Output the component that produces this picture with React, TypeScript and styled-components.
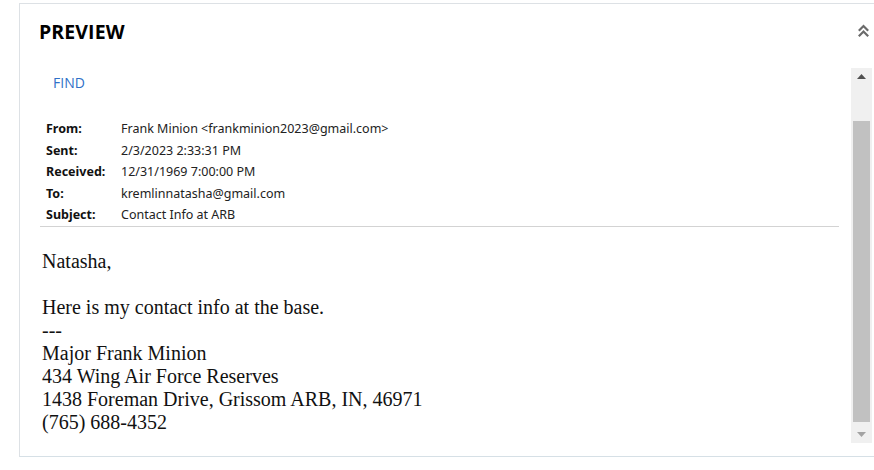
import React from "react";
import styled, { createGlobalStyle } from "styled-components";

const Global = createGlobalStyle`
  html, body { margin: 0; padding: 0; background: #ffffff; }
  body { font-family: "Noto Sans", "Open Sans", sans-serif; overflow: hidden; }
`;

const Panel = styled.section`
  margin: 3px 0 0 19px;
  width: 870px;
  height: 452px;
  border: 1px solid #dde1e5;
  border-bottom-color: #d6e0e6;
  display: flex;
  flex-direction: column;
  background: #fff;
`;

const Header = styled.header`
  height: 64px;
  display: flex;
  align-items: center;
  justify-content: space-between;
  padding: 0 21px 10px 19px;
  box-sizing: border-box;
`;

const Title = styled.h2`
  margin: 0;
  font-family: "Open Sans", "Noto Sans", sans-serif;
  font-size: 19.5px;
  font-weight: 700;
  color: #000;
  letter-spacing: 0.1px;
`;

const CollapseButton = styled.button`
  border: 0;
  background: none;
  padding: 0;
  width: 11px;
  height: 14px;
  display: flex;
  cursor: pointer;
`;

const Body = styled.div`
  display: flex;
  height: 375px;
  margin-right: 18px;
`;

const Content = styled.div`
  flex: 1;
  overflow: hidden;
  padding: 0 12px 0 20px;
`;

const FindLink = styled.a`
  display: block;
  margin: 5px 0 0 13px;
  font-family: "Open Sans", "Noto Sans", sans-serif;
  font-size: 14px;
  line-height: 19px;
  color: #2f70c8;
  text-decoration: none;
`;

const MetaTable = styled.table`
  margin: 26px 0 0 5px;
  border-collapse: collapse;
  font-family: "Noto Sans", "Open Sans", sans-serif;
  color: #222;
`;

const MetaLabel = styled.th`
  text-align: left;
  font-size: 12.5px;
  font-weight: 700;
  color: #111;
  padding: 0 12px 0 1px;
  height: 21.5px;
  width: 63px;
  white-space: nowrap;
`;

const MetaValue = styled.td`
  padding: 0;
  height: 21.5px;
  font-size: 12.5px;
`;

const Divider = styled.hr`
  margin: 0;
  border: 0;
  border-top: 1px solid #d3d3d3;
`;

const Message = styled.div`
  margin: 23px 0 0 2px;
  font-family: "Liberation Serif", "Times New Roman", serif;
  font-size: 20px;
  line-height: 23px;
  color: #111;
`;

const Line = styled.div`
  min-height: 23px;
`;

const Scrollbar = styled.div`
  width: 21px;
  background: #f0f0f0;
  display: flex;
  flex-direction: column;
  align-items: center;
`;

const ArrowBox = styled.div`
  height: 17px;
  width: 100%;
  display: flex;
  align-items: center;
  justify-content: center;
`;

const Track = styled.div`
  flex: 1;
  width: 100%;
  display: flex;
  flex-direction: column;
  align-items: center;
`;

const Thumb = styled.div`
  width: 17px;
  background: #c1c1c1;
`;

const Triangle = ({ up, color }: { up?: boolean; color: string }) => (
  <svg width="9" height="5" viewBox="0 0 9 5">
    {up ? <polygon points="0,5 9,5 4.5,0" fill={color} /> : <polygon points="0,0 9,0 4.5,5" fill={color} />}
  </svg>
);

const rows: [string, string][] = [
  ["From:", "Frank Minion <frankminion2023@gmail.com>"],
  ["Sent:", "2/3/2023 2:33:31 PM"],
  ["Received:", "12/31/1969 7:00:00 PM"],
  ["To:", "kremlinnatasha@gmail.com"],
  ["Subject:", "Contact Info at ARB"],
];

const lines = [
  "Natasha,",
  "",
  "Here is my contact info at the base.",
  "---",
  "Major Frank Minion",
  "434 Wing Air Force Reserves",
  "1438 Foreman Drive, Grissom ARB, IN, 46971",
  "(765) 688-4352",
];

export default function App() {
  return (
    <>
      <Global />
      <Panel>
        <Header>
          <Title>PREVIEW</Title>
          <CollapseButton aria-label="Collapse">
            <svg width="11" height="14" viewBox="0 0 11 14">
              <polyline points="0.8,6.8 5.5,2 10.2,6.8" fill="none" stroke="#6b6b6b" strokeWidth="2.2" />
              <polyline points="0.8,12.3 5.5,7.5 10.2,12.3" fill="none" stroke="#6b6b6b" strokeWidth="2.2" />
            </svg>
          </CollapseButton>
        </Header>
        <Body>
          <Content>
            <FindLink href="#">FIND</FindLink>
            <MetaTable>
              <tbody>
                {rows.map(([k, v]) => (
                  <tr key={k}>
                    <MetaLabel>{k}</MetaLabel>
                    <MetaValue>{v}</MetaValue>
                  </tr>
                ))}
              </tbody>
            </MetaTable>
            <Divider />
            <Message>
              {lines.map((l, i) => (
                <Line key={i}>{l}</Line>
              ))}
            </Message>
          </Content>
          <Scrollbar>
            <ArrowBox>
              <Triangle up color="#505050" />
            </ArrowBox>
            <Track>
              <Thumb style={{ marginTop: 36, height: 301 }} />
            </Track>
            <ArrowBox>
              <Triangle color="#a3a3a3" />
            </ArrowBox>
          </Scrollbar>
        </Body>
      </Panel>
    </>
  );
}
